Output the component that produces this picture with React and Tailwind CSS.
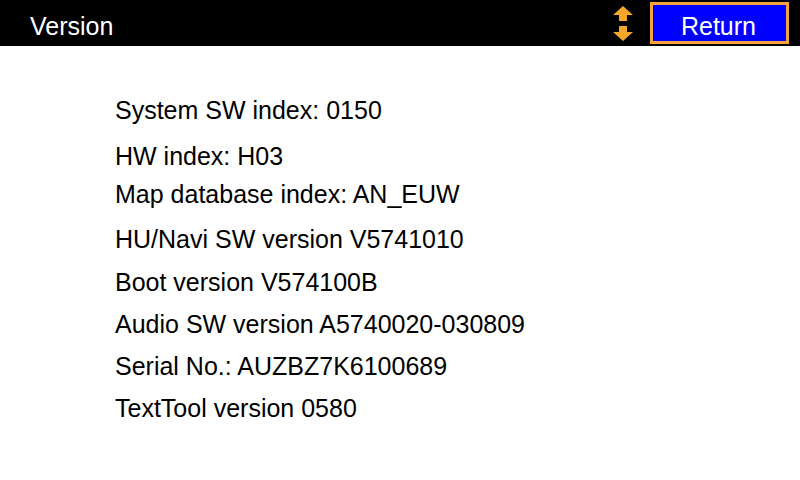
import React from 'react';

const lines = [
  { text: 'System SW index: 0150', mt: 'mt-[52px]' },
  { text: 'HW index: H03', mt: 'mt-[21px]' },
  { text: 'Map database index: AN_EUW', mt: 'mt-[13px]' },
  { text: 'HU/Navi SW version V5741010', mt: 'mt-[20px]' },
  { text: 'Boot version V574100B', mt: 'mt-[18px]' },
  { text: 'Audio SW version A5740020-030809', mt: 'mt-[17px]' },
  { text: 'Serial No.: AUZBZ7K6100689', mt: 'mt-[17px]' },
  { text: 'TextTool version 0580', mt: 'mt-[17px]' },
];

const ScrollArrows = () => (
  <svg width="20" height="36" viewBox="0 0 20 36" className="block">
    <polygon points="0,9 10,0 20,9 14,9 14,15 6,15 6,9" fill="#f5a52a" />
    <polygon points="6,20 14,20 14,26 20,26 10,35 0,26 6,26" fill="#f5a52a" />
  </svg>
);

const App = () => {
  return (
    <div
      className="w-[800px] h-[480px] bg-white overflow-hidden"
      style={{ fontFamily: '"Liberation Sans", Arial, sans-serif' }}
    >
      <div className="h-[46px] bg-black flex items-center">
        <span className="ml-[30px] mt-[7px] text-white text-[25px] leading-none">Version</span>
        <div className="ml-auto mr-[17px] mt-[1px]">
          <ScrollArrows />
        </div>
        <div className="mr-[11px] w-[139px] h-[42px] border-[3px] border-[#f2a33a] bg-[#0000ff] flex items-center justify-center">
          <span className="text-white text-[25px] leading-none mt-[7px] -ml-[2px]">Return</span>
        </div>
      </div>
      <div className="pl-[115px] flex flex-col text-black">
        {lines.map((l) => (
          <div key={l.text} className={`${l.mt} text-[25px] leading-[25px] whitespace-nowrap`}>
            {l.text}
          </div>
        ))}
      </div>
    </div>
  );
};

export default App;
